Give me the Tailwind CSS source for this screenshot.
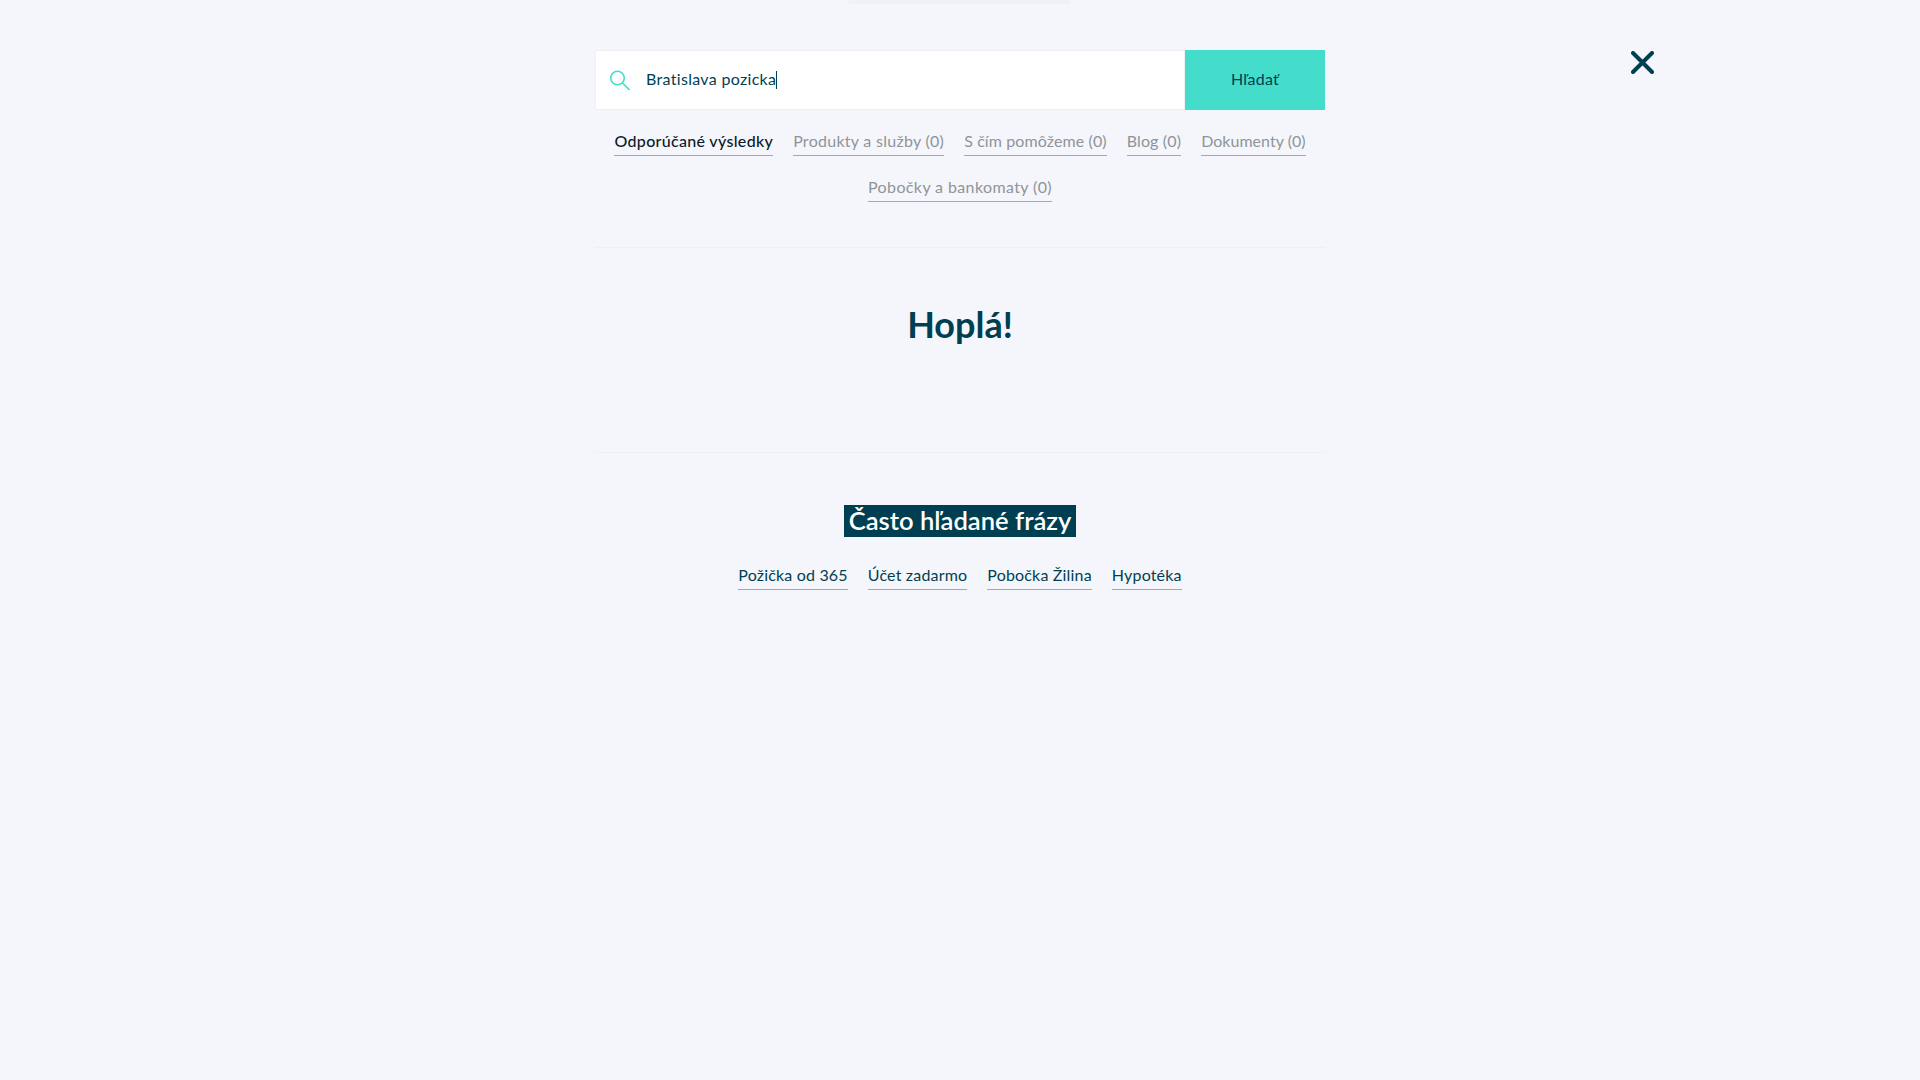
<!DOCTYPE html>
<html lang="sk">
<head>
    <meta charset="UTF-8">
    <meta name="viewport" content="width=device-width, initial-scale=1.0">
    <title>Hľadať</title>
    <script src="https://cdn.jsdelivr.net/npm/@tailwindcss/browser@4"></script>
</head>
<body class="relative min-h-[1080px] overflow-hidden bg-[#f4f6fb] font-['Lato',sans-serif] text-[#003f52]">

    <!-- faint edge of the page behind the overlay -->
    <div class="absolute left-[848px] top-0 h-[4px] w-[223px] rounded-b-md bg-[#f0f1f5]"></div>

    <!-- Close -->
    <button class="absolute left-[1631px] top-[51px] h-[23px] w-[23px]">
        <svg viewBox="0 0 23 23" class="h-full w-full" fill="none" stroke="#003f52" stroke-width="4" stroke-linecap="round">
            <path d="M2 2 L21 21 M21 2 L2 21"/>
        </svg>
    </button>

    <main class="mx-auto w-[730px] pt-[50px]">
        <!-- Search -->
        <div class="flex h-[60px]">
            <div class="flex flex-1 items-center border border-[#eef0f3] bg-white">
                <svg viewBox="0 0 20 20" class="ml-[14px] h-5 w-5" fill="none" stroke="#44dccb" stroke-width="1.6">
                    <circle cx="7.5" cy="8" r="6.8"/>
                    <path d="M12.5 13 L19.5 20"/>
                </svg>
                <div class="ml-4 flex h-[18px] items-center border-r border-[#003f52] pb-[2px] text-[16px] leading-none tracking-[0.32px]">Bratislava pozicka</div>
            </div>
            <button class="w-[140px] bg-[#44dccb] pb-[2px] text-[16px] tracking-[0.3px] text-[#003f52]">Hľadať</button>
        </div>

        <!-- Tabs -->
        <nav class="mt-[21px] flex flex-wrap justify-center gap-x-5 gap-y-[21px] text-[16px] leading-5 text-[#8f9499]">
            <a class="border-b border-[#4fd1c0] pb-1 font-medium tracking-[0.32px] text-[#0c1b2a]">Odporúčané výsledky</a>
            <a class="border-b border-[#4fd1c0] pb-1 tracking-[0.28px]">Produkty a služby (0)</a>
            <a class="border-b border-[#4fd1c0] pb-1 tracking-[0.1px]">S čím pomôžeme (0)</a>
            <a class="border-b border-[#4fd1c0] pb-1 tracking-[0.16px]">Blog (0)</a>
            <a class="border-b border-[#4fd1c0] pb-1 tracking-[0.02px]">Dokumenty (0)</a>
            <a class="border-b border-[#4fd1c0] pb-1 tracking-[0.38px]">Pobočky a bankomaty (0)</a>
        </nav>

        <hr class="mt-[45px] border-[#eef0f3]">

        <section class="h-[204px] pt-[54px] text-center">
            <h1 class="text-[36px] font-bold leading-[44px]">Hoplá!</h1>
        </section>

        <hr class="border-[#eef0f3]">

        <section class="pt-[52px] text-center">
            <h2 class="mx-auto w-fit bg-[#003f52] px-[5px] pb-[2px] text-[25.6px] font-semibold leading-[30px] text-white">Často hľadané frázy</h2>
            <div class="mt-[28px] flex justify-center gap-x-5 text-[16px] leading-5 tracking-[0.18px]">
                <a class="border-b border-[#4fd1c0] pb-1">Požička od 365</a>
                <a class="border-b border-[#4fd1c0] pb-1">Účet zadarmo</a>
                <a class="border-b border-[#4fd1c0] pb-1">Pobočka Žilina</a>
                <a class="border-b border-[#4fd1c0] pb-1">Hypotéka</a>
            </div>
        </section>
    </main>
</body>
</html>
